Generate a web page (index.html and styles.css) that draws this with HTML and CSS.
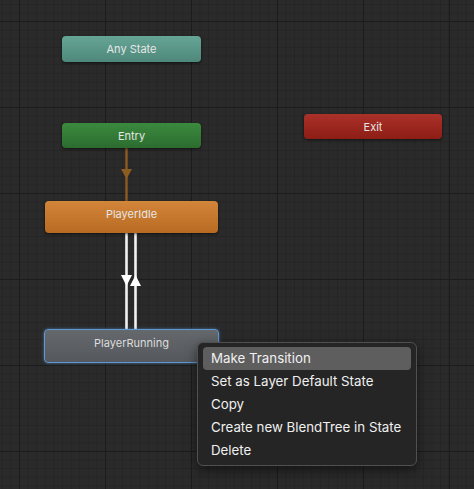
FILE: index.html
```html
<!DOCTYPE html>
<html lang="en">
<head>
  <meta charset="UTF-8" />
  <title>Animator</title>
  <link rel="stylesheet" href="styles.css">
</head>
<body>

<div class="graph">
  <svg class="edges" width="474" height="489" viewBox="0 0 474 489">
    <!-- Entry -> PlayerIdle -->
    <line x1="126.5" y1="148" x2="126.5" y2="201" stroke="#8c5c22" stroke-width="2.4"/>
    <polygon points="121,169 132,169 126.5,179" fill="#8c5c22"/>

    <!-- PlayerIdle <-> PlayerRunning -->
    <line x1="126.5" y1="233" x2="126.5" y2="329" stroke="#c8c8c8" stroke-width="3"/>
    <line x1="126.5" y1="233" x2="126.5" y2="329" stroke="#f2f2f2" stroke-width="1"/>
    <line x1="135.5" y1="233" x2="135.5" y2="329" stroke="#c8c8c8" stroke-width="3"/>
    <line x1="135.5" y1="233" x2="135.5" y2="329" stroke="#f2f2f2" stroke-width="1"/>
    <polygon points="121,275 132,275 126.5,286" fill="#fff"/>
    <polygon points="130,286 141,286 135.5,275" fill="#fff"/>
  </svg>

  <div class="node any-state">Any State</div>
  <div class="node entry">Entry</div>
  <div class="node exit">Exit</div>
  <div class="node idle">PlayerIdle</div>
  <div class="node running">PlayerRunning</div>

  <div class="context-menu">
    <div class="menu-item active">Make Transition</div>
    <div class="menu-item">Set as Layer Default State</div>
    <div class="menu-item">Copy</div>
    <div class="menu-item">Create new BlendTree in State</div>
    <div class="menu-item">Delete</div>
  </div>
</div>

</body>
</html>
```

FILE: styles.css
```css
* {
  box-sizing: border-box;
  margin: 0;
  padding: 0;
}

html, body {
  width: 474px;
  height: 489px;
  overflow: hidden;
  background: #282828;
  font-family: Inter, "Noto Sans", sans-serif;
}

.graph {
  position: relative;
  width: 474px;
  height: 489px;
  background-color: #2a2a2a;
  background-image:
    linear-gradient(to right, #1c1c1c 1px, transparent 1px),
    linear-gradient(to bottom, #1c1c1c 1px, transparent 1px),
    linear-gradient(to right, #252525 1px, transparent 1px),
    linear-gradient(to bottom, #252525 1px, transparent 1px);
  background-size: 86px 86px, 86px 86px, 8.6px 8.6px, 8.6px 8.6px;
  background-position: 19px 21px, 19px 21px, 1.8px 4px, 1.8px 4px;
}

.edges {
  position: absolute;
  top: 0;
  left: 0;
  z-index: 1;
}

.node {
  position: absolute;
  z-index: 2;
  display: flex;
  align-items: center;
  justify-content: center;
  border-radius: 4px;
  font-size: 11px;
  color: #e6e6e6;
  box-shadow: 0 1px 3px rgba(0,0,0,0.6);
}

.any-state {
  left: 62px;
  top: 36px;
  width: 139px;
  height: 26px;
  background: linear-gradient(#66a595, #4e887b);
}

.entry {
  left: 62px;
  top: 123px;
  width: 139px;
  height: 25px;
  background: linear-gradient(#3b8a3e, #2c6c2f);
}

.exit {
  left: 304px;
  top: 114px;
  width: 138px;
  height: 25px;
  background: linear-gradient(#ab3129, #8c1d15);
}

.idle {
  left: 45px;
  top: 201px;
  width: 173px;
  height: 32px;
  padding-bottom: 7px;
  background: linear-gradient(#d2863a, #b86a22);
}

.running {
  left: 44px;
  top: 329px;
  width: 175px;
  height: 34px;
  padding-bottom: 6px;
  background: linear-gradient(#65686c, #55585c);
  border: 1.5px solid #5d98d2;
  box-shadow: 0 0 3px rgba(93,152,210,0.7);
  color: #dcdcdc;
}

.context-menu {
  position: absolute;
  z-index: 3;
  left: 197px;
  top: 342px;
  width: 220px;
  height: 124px;
  padding: 4px 5px;
  background: #252525;
  border: 1px solid #505050;
  border-radius: 6px;
  box-shadow: 0 4px 12px rgba(0,0,0,0.5);
  display: flex;
  flex-direction: column;
}

.menu-item {
  height: 23px;
  line-height: 23px;
  padding: 0 8px;
  font-size: 13.3px;
  color: #f0f0f0;
  border-radius: 4px;
  white-space: nowrap;
}

.menu-item.active {
  background: #5e5e5e;
}
```
